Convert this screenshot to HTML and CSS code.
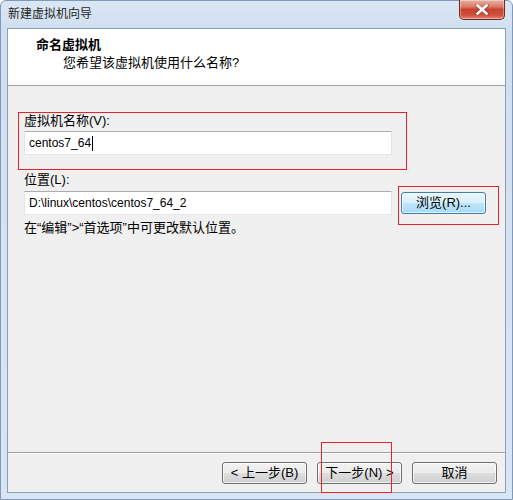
FILE: index.html
```html
<!DOCTYPE html>
<html lang="zh-CN">
<head>
<meta charset="utf-8">
<title>新建虚拟机向导</title>
<link rel="stylesheet" href="styles.css">
</head>
<body>
<div class="window">
  <div class="titlebar">
    <span class="title">新建虚拟机向导</span>
    <div class="close" aria-label="关闭">
      <svg width="14" height="11" viewBox="0 0 14 11"><path d="M2 1.5 L12 9.5 M12 1.5 L2 9.5" stroke="#5a1a12" stroke-width="4" stroke-linecap="square" opacity="0.35"/><path d="M2.5 1.5 L11.5 9.5 M11.5 1.5 L2.5 9.5" stroke="#fff" stroke-width="2.6" stroke-linecap="square"/></svg>
    </div>
  </div>
  <div class="client">
    <div class="header">
      <div class="h-title">命名虚拟机</div>
      <div class="h-sub">您希望该虚拟机使用什么名称?</div>
    </div>
    <div class="body">
      <div class="label">虚拟机名称(V):</div>
      <div class="field"><span class="val">centos7_64</span><span class="caret"></span></div>
      <div class="label label-gap">位置(L):</div>
      <div class="row">
        <div class="field field-row"><span class="val">D:\linux\centos\centos7_64_2</span></div>
        <div class="btn btn-hot">浏览(R)...</div>
      </div>
      <div class="hint">在“编辑”&gt;“首选项”中可更改默认位置。</div>
    </div>
    <div class="footer">
      <div class="btn">&lt; 上一步(B)</div>
      <div class="btn">下一步(N) &gt;</div>
      <div class="btn">取消</div>
    </div>
  </div>
  <div class="mark mark-name"></div>
  <div class="mark mark-browse"></div>
  <div class="mark mark-next"></div>
</div>
</body>
</html>
```

FILE: styles.css
```css
html, body {
  margin: 0;
  padding: 0;
  background: #ffffff;
}

.window {
  position: relative;
  box-sizing: border-box;
  width: 513px;
  height: 500px;
  padding: 0 6px 6px 6px;
  border: 1px solid #7f99b9;
  border-radius: 6px 6px 0 0;
  background: linear-gradient(180deg, #dae6f4 0%, #d0dff0 30px, #d9e5f3 100%);
  display: flex;
  flex-direction: column;
  font-family: "Liberation Sans", "Noto Sans CJK SC", sans-serif;
  font-size: 13px;
  color: #000;
}

.titlebar {
  height: 27px;
  display: flex;
  justify-content: space-between;
  align-items: flex-start;
}

.title {
  padding-left: 1px;
  line-height: 27px;
  font-size: 12px;
  color: #1e1e1e;
}

.close {
  box-sizing: border-box;
  width: 46px;
  height: 20px;
  margin-top: -1px;
  margin-right: 1px;
  border: 1px solid #6b2a20;
  border-top: none;
  border-radius: 0 0 5px 5px;
  background: linear-gradient(180deg, #eab3a5 0%, #d97b68 35%, #c8432d 50%, #d2503a 80%, #e38a73 100%);
  display: flex;
  align-items: center;
  justify-content: center;
  box-shadow: inset 0 0 0 1px rgba(255, 255, 255, 0.35);
}

.client {
  flex: 1;
  display: flex;
  flex-direction: column;
  border: 1px solid #8e9fb5;
  background: #f0f0f0;
}

.header {
  box-sizing: border-box;
  height: 57px;
  padding: 7px 0 0 28px;
  background: #ffffff;
  border-bottom: 1px solid #a0a0a0;
  box-shadow: inset 0 -4px 0 #fbfbfb;
}

.h-title {
  font-weight: bold;
  line-height: 18px;
}

.h-sub {
  padding-left: 27px;
  line-height: 18px;
}

.body {
  flex: 1;
  padding: 27px 0 0 16px;
}

.label {
  line-height: 16px;
}

.label-gap {
  margin-top: 17px;
}

.field {
  box-sizing: border-box;
  width: 368px;
  height: 24px;
  margin-top: 2px;
  padding-left: 4px;
  display: flex;
  align-items: center;
  background: #ffffff;
  border: 1px solid #e2e3ea;
  border-top-color: #abadb3;
  border-bottom-color: #e3e9ef;
  font-size: 12px;
}

.caret {
  width: 1px;
  height: 15px;
  background: #000;
  margin-left: 1px;
}

.row {
  display: flex;
  align-items: center;
  gap: 9px;
  margin-top: 3px;
}

.field-row {
  margin-top: 0;
}

.hint {
  margin-top: 5px;
  line-height: 16px;
}

.btn {
  box-sizing: border-box;
  width: 85px;
  height: 22px;
  border: 1px solid #707070;
  border-radius: 3px;
  background: linear-gradient(180deg, #f2f2f2 0%, #ebebeb 48%, #dddddd 52%, #cfcfcf 100%);
  box-shadow: inset 0 0 0 1px rgba(255, 255, 255, 0.7);
  display: flex;
  align-items: center;
  justify-content: center;
  line-height: 16px;
}

.btn-hot {
  border-color: #3c7fb1;
  background: linear-gradient(180deg, #eaf6fd 0%, #d9f0fc 48%, #bee6fd 52%, #a7d9f5 100%);
}

.footer {
  box-sizing: border-box;
  height: 40px;
  padding: 9px 8px 0 0;
  border-top: 1px solid #a0a0a0;
  box-shadow: inset 0 1px 0 #ffffff;
  display: flex;
  justify-content: flex-end;
  gap: 10px;
}

.mark {
  position: absolute;
  z-index: 2;
  box-sizing: border-box;
  box-shadow: inset 0 0 0 1px #f0202a;
  pointer-events: none;
}

.mark-name {
  left: 17px;
  top: 111px;
  width: 389px;
  height: 58px;
}

.mark-browse {
  left: 397px;
  top: 185px;
  width: 101px;
  height: 39px;
}

.mark-next {
  left: 320px;
  top: 441px;
  width: 71px;
  height: 51px;
}
```
